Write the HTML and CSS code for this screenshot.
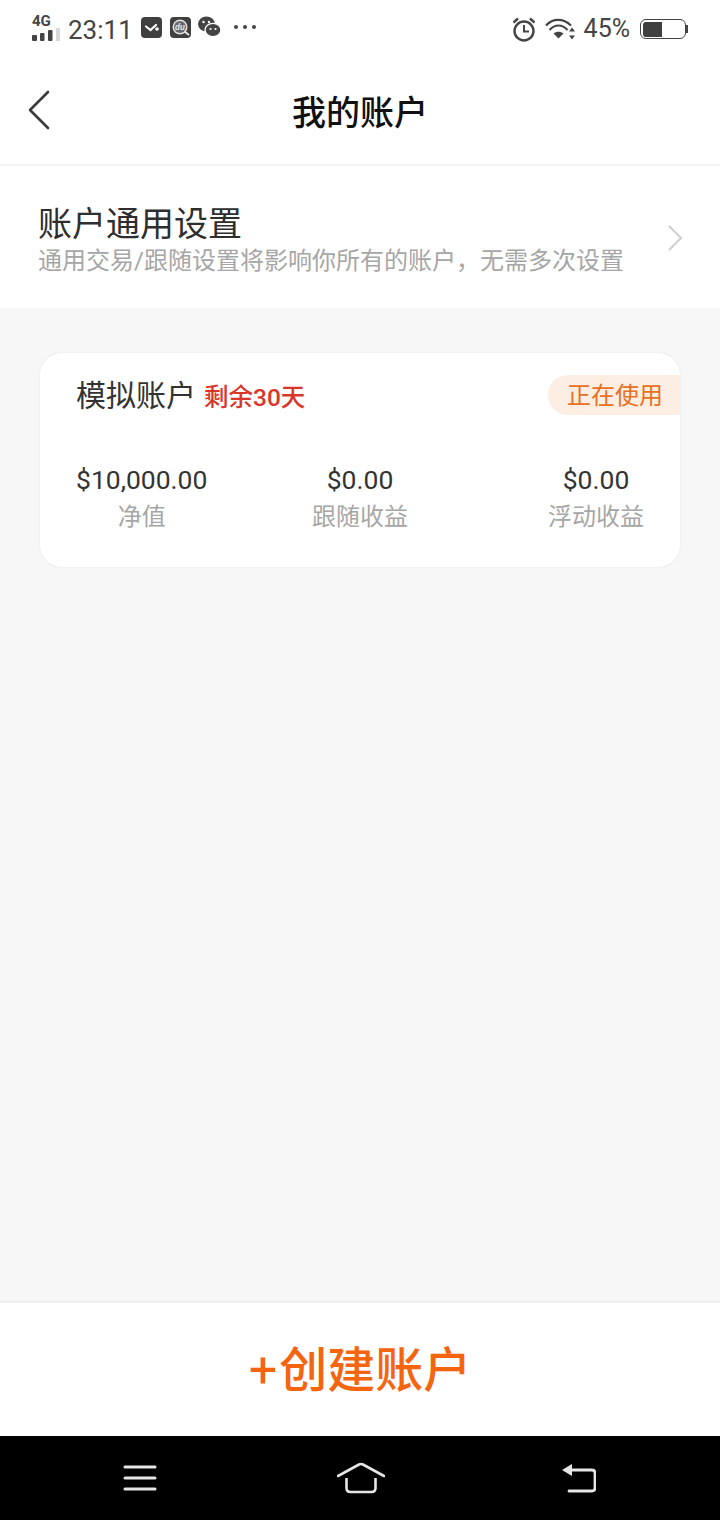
FILE: index.html
```html
<!DOCTYPE html>
<html lang="zh-CN">
<head>
<meta charset="utf-8">
<title>我的账户</title>
<link rel="stylesheet" href="styles.css">
</head>
<body>
<div class="status">
  <div class="status-left">
    <div class="net">
      <span class="net-label">4G</span>
      <svg class="net-bars" width="28" height="13" viewBox="0 0 28 13"><rect x="0" y="7" width="5" height="6" rx="1" fill="#444"/><rect x="8" y="5" width="4.500" height="8" rx="1" fill="#444"/><rect x="16" y="2" width="4.500" height="11" rx="1" fill="#444"/><rect x="24" y="0" width="4" height="13" fill="#d8d8d8"/></svg>
    </div>
    <span class="time">23:11</span>
    <svg class="app" width="21" height="21" viewBox="0 0 21 21"><rect width="21" height="21" rx="4" fill="#3f3f3f"/><path d="M5 9.500l4.500 3.500 5.500-5" fill="none" stroke="#fff" stroke-width="2.200" stroke-linecap="round"/><circle cx="16" cy="12" r="1.800" fill="#fff"/></svg>
    <svg class="app" width="21" height="21" viewBox="0 0 21 21"><rect width="21" height="21" rx="4" fill="#3f3f3f"/><circle cx="10" cy="10" r="7.500" fill="#e2e2e2"/><circle cx="10" cy="10" r="6" fill="#666"/><path d="M14.500 14.500l4.500 3.500" stroke="#e2e2e2" stroke-width="2"/><text class="du" x="10" y="12.500" text-anchor="middle">du</text></svg>
    <svg class="app app-chat" width="23" height="22" viewBox="0 0 23 22"><ellipse cx="8.500" cy="8" rx="8.500" ry="7.500" fill="#444"/><ellipse cx="15" cy="14" rx="8" ry="6.600" fill="#444" stroke="#fff" stroke-width="1.400"/><circle cx="5.500" cy="6" r="1.200" fill="#fff"/><circle cx="11" cy="6" r="1.200" fill="#fff"/><circle cx="12.500" cy="13" r="1.100" fill="#fff"/><circle cx="17.500" cy="13" r="1.100" fill="#fff"/></svg>
    <svg class="more" width="22" height="4" viewBox="0 0 22 4"><circle cx="2" cy="2" r="2" fill="#444"/><circle cx="11" cy="2" r="2" fill="#444"/><circle cx="20" cy="2" r="2" fill="#444"/></svg>
  </div>
  <div class="status-right">
    <svg class="alarm" width="24" height="25" viewBox="0 0 24 25"><circle cx="12" cy="14" r="9.500" fill="none" stroke="#444" stroke-width="2.400"/><path d="M12 8v6.500h5" fill="none" stroke="#444" stroke-width="2"/><path d="M1.500 5.500L6 1.500M22.500 5.500L18 1.500" stroke="#444" stroke-width="2.400"/></svg>
    <svg class="wifi" width="31" height="22" viewBox="0 0 31 22"><path d="M1 7.500C8 0 18 0 26 7.500" fill="none" stroke="#444" stroke-width="2.200"/><path d="M4.500 12C10 6 17 6 22.500 12" fill="none" stroke="#444" stroke-width="2.200"/><path d="M8.500 15.500c3-2.500 7-2.500 10 0L13.500 20.500z" fill="#444"/><path d="M27 9.500l3 4h-6zM27 21.500l3-4h-6z" fill="#444"/></svg>
    <span class="batt-pct">45%</span>
    <div class="battery"><div class="battery-fill"></div></div>
    <span class="battery-tip"></span>
  </div>
</div>

<header class="nav">
  <svg class="back" width="24" height="40" viewBox="0 0 24 40"><path d="M21 2L3 20l18 18" fill="none" stroke="#3a3a3a" stroke-width="2.600" stroke-linecap="round" stroke-linejoin="round"/></svg>
  <h1 class="nav-title">我的账户</h1>
</header>

<section class="settings">
  <div class="settings-text">
    <div class="settings-title">账户通用设置</div>
    <div class="settings-sub">通用交易/跟随设置将影响你所有的账户，无需多次设置</div>
  </div>
  <svg class="chev" width="16" height="26" viewBox="0 0 16 26"><path d="M2 1l12 12L2 25" fill="none" stroke="#cfcfcf" stroke-width="2"/></svg>
</section>

<main class="main">
  <article class="card">
    <div class="card-head">
      <div class="card-name">
        <span class="card-title">模拟账户</span>
        <span class="card-days">剩余30天</span>
      </div>
      <span class="tag">正在使用</span>
    </div>
    <div class="stats">
      <div class="stat stat-l"><span class="stat-val">$10,000.00</span><span class="stat-lab">净值</span></div>
      <div class="stat"><span class="stat-val">$0.00</span><span class="stat-lab">跟随收益</span></div>
      <div class="stat stat-r"><span class="stat-val">$0.00</span><span class="stat-lab">浮动收益</span></div>
    </div>
  </article>
</main>

<footer class="create"><span class="create-text"><span class="create-plus">+</span>创建账户</span></footer>

<div class="sysnav">
  <svg width="34" height="26" viewBox="0 0 34 26"><path d="M2 2h30M2 13h30M2 24h30" stroke="#e6e6e6" stroke-width="3" stroke-linecap="round"/></svg>
  <svg class="home" width="48" height="32" viewBox="0 0 48 32"><path d="M1 14L22 2.500q2-1 4 0L47 14" fill="none" stroke="#e6e6e6" stroke-width="2.600" stroke-linecap="round"/><path d="M9.500 16v10q0 4 4 4h21q4 0 4-4V16" fill="none" stroke="#e6e6e6" stroke-width="2.600"/></svg>
  <svg width="34" height="30" viewBox="0 0 34 30"><path d="M0 7l10-6v12z" fill="#e6e6e6"/><path d="M8 7h22q3 0 3 3v15q0 3-3 3H7" fill="none" stroke="#e6e6e6" stroke-width="2.800" stroke-linecap="round"/></svg>
</div>
</body>
</html>
```
FILE: styles.css
```css
* { box-sizing: border-box; }
html, body { margin: 0; padding: 0; }
body {
  width: 720px;
  height: 1520px;
  display: flex;
  flex-direction: column;
  background: #fff;
  font-family: Roboto, "Noto Sans CJK SC", sans-serif;
  overflow: hidden;
}
.status {
  height: 56px;
  flex: none;
  display: flex;
  justify-content: space-between;
  align-items: center;
  padding: 4px 32px 0;
  color: #444;
}
.status-left, .status-right { display: flex; align-items: center; }
.status-right { margin-top: -2px; }
.net { position: relative; width: 28px; height: 26px; margin-top: -4px; }
.net-label {
  position: absolute; left: 0; top: -1px;
  font-size: 15px; line-height: 15px; font-weight: 700; color: #444;
}
.net-bars { position: absolute; left: 0; bottom: 0; }
.time { font-size: 26px; line-height: 30px; margin-left: 8px; color: #444; }
.app { margin-left: 8px; margin-top: -6px; }
.app-chat { margin-left: 7px; }
.more { margin-left: 13px; margin-top: -6px; }
.du { font-size: 9px; font-weight: 700; font-style: italic; fill: #e2e2e2; font-family: Roboto, sans-serif; }
.alarm { margin-right: 8px; }
.wifi { margin-left: 1px; }
.batt-pct { font-size: 25px; line-height: 28px; margin-left: 8px; color: #444; }
.battery {
  width: 46px; height: 20px; margin-left: 10px;
  border: 1.500px solid #444; border-radius: 6px; padding: 1.500px;
}
.battery-fill { width: 19px; height: 100%; background: #3f3f3f; border-radius: 3px 0 0 3px; }
.battery-tip { width: 2px; height: 8px; background: #444; margin-right: 0; }

.nav {
  height: 110px;
  flex: none;
  position: relative;
  display: flex;
  align-items: center;
  justify-content: center;
  border-bottom: 2px solid #f2f2f2;
}
.back { position: absolute; left: 27px; top: 34px; }
.nav-title { margin: 6px 0 0; font-size: 34px; font-weight: 500; color: #111; line-height: 46px; }

.settings {
  height: 142px;
  flex: none;
  display: flex;
  align-items: center;
  justify-content: space-between;
  padding: 0 37px 0 38px;
}
.settings-text { padding-top: 11px; }
.settings-title { font-size: 34px; line-height: 38px; color: #2e2e2e; }
.settings-sub { font-size: 24px; line-height: 37px; color: #a6a6a6; }
.chev { margin-top: 2px; }

.main { flex: 1; background: #f7f7f7; padding: 45px 40px 0; }
.card {
  height: 214px;
  background: #fff;
  border-radius: 22px;
  box-shadow: 0 0 2px rgba(0, 0, 0, 0.1);
  padding-top: 22px;
}
.card-head { display: flex; justify-content: space-between; align-items: center; height: 40px; padding-left: 36px; }
.card-name { display: flex; align-items: center; gap: 8px; margin-top: 2px; }
.card-title { font-size: 30px; line-height: 40px; color: #333; }
.card-days { font-size: 24.500px; line-height: 34px; color: #d9362b; margin-top: 4px; font-weight: 500; }
.tag {
  width: 132px; height: 40px;
  background: #fdeee3;
  color: #e8701f;
  font-size: 24px; line-height: 42px;
  padding-left: 19px;
  border-radius: 20px 0 0 20px;
}
.stats {
  display: grid;
  grid-template-columns: 1fr auto 1fr;
  padding: 0 36px;
  margin-top: 46px;
}
.stat { display: flex; flex-direction: column; align-items: center; }
.stat-l { justify-self: start; }
.stat-r { justify-self: end; }
.stat-val { font-size: 26.500px; line-height: 38px; color: #333; }
.stat-lab { font-size: 24px; line-height: 36px; color: #a6a6a6; }

.create {
  height: 135px;
  flex: none;
  border-top: 2px solid #f0f0f0;
  display: flex;
  align-items: center;
  justify-content: center;
}
.create-text { font-size: 48px; line-height: 60px; font-weight: 500; color: #f5650f; padding-top: 2px; }
.create-plus { font-weight: 400; font-size: 50px; margin-right: 2px; }

.sysnav {
  height: 84px;
  flex: none;
  background: #000;
  display: flex;
  align-items: center;
  justify-content: space-between;
  padding: 0 124px 0 123px;
}
.home { margin-left: 3px; }
```
